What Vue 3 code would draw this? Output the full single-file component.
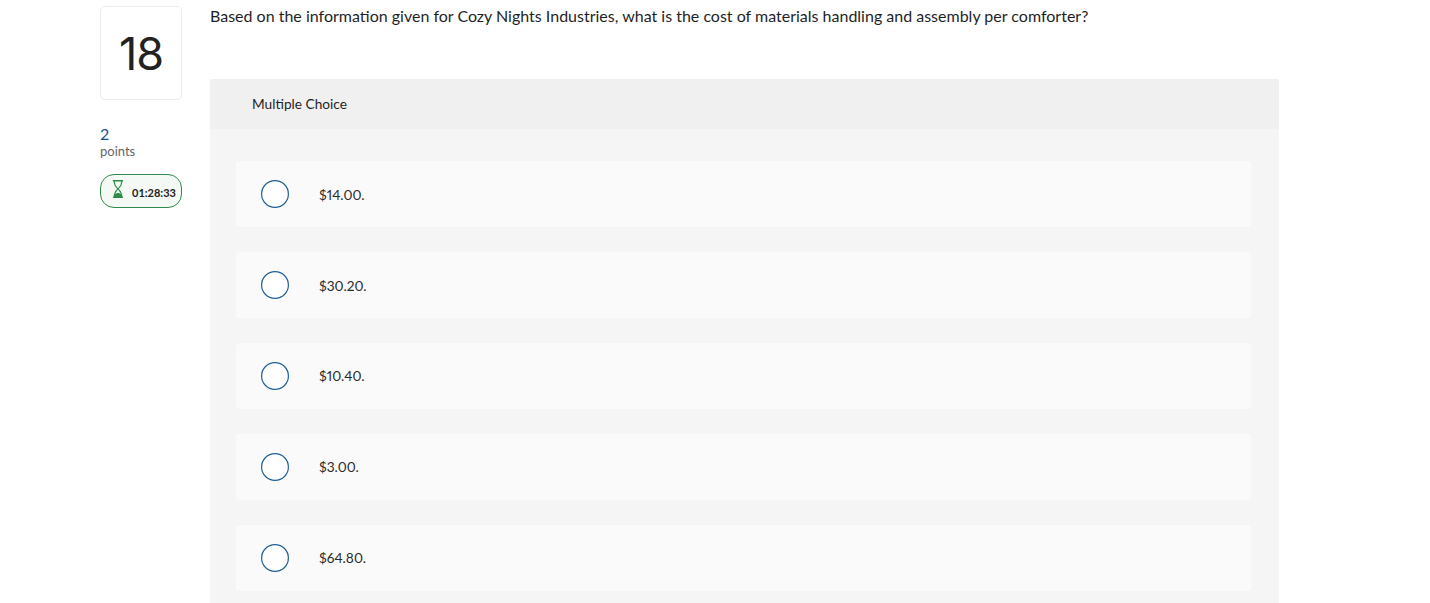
<template>
  <div class="page">
    <aside class="side">
      <div class="number-box">18</div>
      <div class="points">
        <div class="points-value">2</div>
        <div class="points-label">points</div>
      </div>
      <div class="timer">
        <svg class="hourglass" width="12" height="18" viewBox="0 0 12 18" fill="none">
          <path d="M1.500 .8h9M1.500 17.200h9" stroke="#2e8b4a" stroke-width="1.400" stroke-linecap="round" />
          <path d="M2.200 1c0 3.800 1.300 5.300 2.900 6.800.7.600.7 1.500 0 2.100C3.500 11.500 2.200 13 2.200 17M9.800 1c0 3.800-1.300 5.300-2.900 6.800-.7.600-.7 1.500 0 2.100C8.500 11.500 9.800 13 9.800 17" stroke="#2e8b4a" stroke-width="1.100" />
          <path d="M2 17c.2-2.500 2-3.900 4-4.300 2 .4 3.800 1.800 4 4.300z" fill="#2e8b4a" />
        </svg>
        <span class="timer-text">01:28:33</span>
      </div>
    </aside>

    <main class="content">
      <p class="question">Based on the information given for Cozy Nights Industries, what is the cost of materials handling and assembly per comforter?</p>

      <section class="panel">
        <header class="panel-head">Multiple Choice</header>
        <div class="options">
          <label v-for="opt in options" :key="opt" class="option">
            <svg class="radio" width="28" height="28" viewBox="0 0 28 28">
              <circle cx="14" cy="14" r="13.400" fill="#fff" stroke="#1f5f99" stroke-width="1.200" />
            </svg>
            <span class="option-text">{{ opt }}</span>
          </label>
        </div>
      </section>
    </main>
  </div>
</template>

<script setup>
const options = ["$14.00.", "$30.20.", "$10.40.", "$3.00.", "$64.80."];
</script>

<style>
html, body {
  overflow: hidden;
  background: #fff;
}
</style>

<style scoped>
.page {
  display: flex;
  align-items: flex-start;
  gap: 28px;
  padding: 6px 0 0 100px;
  font-family: "Lato", "Liberation Sans", sans-serif;
  color: #1f1f1f;
}

.side {
  width: 82px;
  flex: none;
}

.number-box {
  box-sizing: border-box;
  height: 94px;
  border: 1px solid #ececec;
  border-radius: 5px;
  display: flex;
  align-items: center;
  justify-content: center;
  font-family: "Inter", "Lato", sans-serif;
  font-size: 45px;
  letter-spacing: -1px;
  color: #222;
}

.points {
  margin-top: 25px;
}

.points-value {
  font-size: 16px;
  line-height: 18px;
  color: #1c4f8f;
}

.points-label {
  font-size: 13px;
  line-height: 16px;
  color: #666;
}

.timer {
  box-sizing: border-box;
  height: 34px;
  margin-top: 15px;
  border: 1px solid #2e8b4a;
  border-radius: 14px;
  background: #f4f9f5;
  display: flex;
  align-items: center;
  padding-left: 11px;
  gap: 8px;
}

.hourglass {
  flex: none;
  margin-top: -4px;
}

.timer-text {
  font-size: 11px;
  font-weight: 700;
  color: #222;
  margin-top: 3px;
}

.content {
  width: 1069px;
  flex: none;
}

.question {
  margin: 0;
  height: 73px;
  font-size: 16px;
  line-height: 20px;
  color: #1f1f1f;
}

.panel {
  background: #f5f5f5;
  border-radius: 3px 3px 0 0;
  padding-bottom: 40px;
}

.panel-head {
  height: 50px;
  display: flex;
  align-items: center;
  padding: 0 0 2px 42px;
  box-sizing: border-box;
  background: #f0f0f0;
  border-radius: 3px 3px 0 0;
  font-size: 13.700px;
}

.options {
  display: flex;
  flex-direction: column;
  gap: 24.500px;
  padding: 32px 28px 0 26px;
}

.option {
  height: 66.400px;
  display: flex;
  align-items: center;
  background: #fafafa;
  border-radius: 3px;
  padding-left: 25px;
}

.radio {
  flex: none;
}

.option-text {
  margin-left: 30px;
  font-size: 13.700px;
  font-variant-numeric: proportional-nums;
  color: #2a2a2a;
}
</style>
